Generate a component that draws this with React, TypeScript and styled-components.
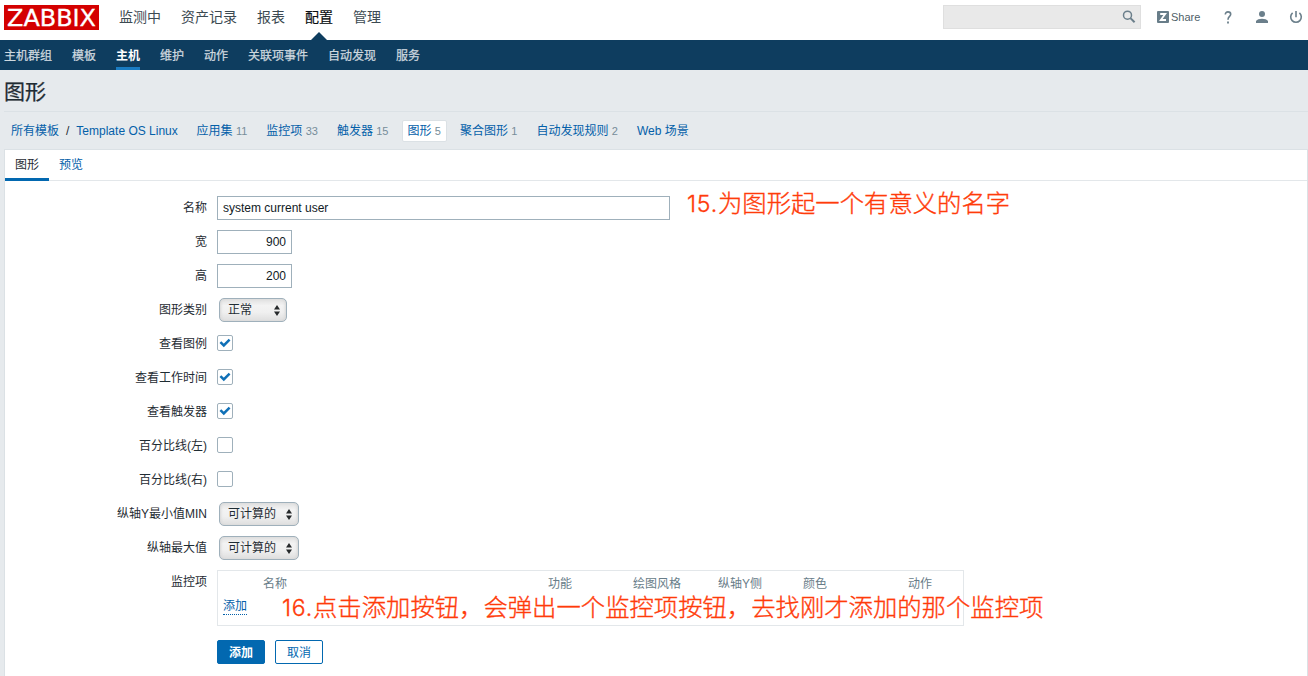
import React from 'react';
import styled, { createGlobalStyle } from 'styled-components';

const latin = "'Liberation Sans', 'Noto Sans CJK SC', sans-serif";

const GlobalStyle = createGlobalStyle`
  * { box-sizing: border-box; }
  body {
    margin: 0;
    background: #e6eaed;
    color: #1f2c33;
    font: 12px/16px ${latin};
    overflow: hidden;
  }
  a { color: inherit; text-decoration: none; }
`;

const Page = styled.div`
  display: flex;
  flex-direction: column;
  width: 1308px;
  height: 676px;
  overflow: hidden;
`;

const Header = styled.header`
  display: flex;
  height: 40px;
  padding-left: 4px;
  background: #fff;
`;

const Logo = styled.a`
  display: flex;
  align-items: center;
  justify-content: center;
  width: 95px;
  height: 25px;
  margin: 5px 20px 0 0;
  background: #d40000;

  svg { overflow: visible; }
`;

const MainMenu = styled.nav`
  display: flex;
  gap: 20px;
`;

const MainItem = styled.a<{ $active?: boolean }>`
  position: relative;
  padding-top: 7px;
  font-size: 14px;
  line-height: 20px;
  color: ${p => (p.$active ? '#0a0f12' : '#3c4a52')};
  ${p => p.$active && `
    -webkit-text-stroke: 0.2px #0a0f12;
    &::after {
      content: '';
      position: absolute;
      left: 50%;
      bottom: 0;
      margin-left: -8px;
      border: 8px solid transparent;
      border-top: 0;
      border-bottom-color: #0e3d5f;
    }
  `}
`;

const Tools = styled.div`
  display: flex;
  align-items: flex-start;
  margin-left: auto;
  padding: 5px 5px 0 0;
`;

const Search = styled.div`
  display: flex;
  align-items: center;
  justify-content: flex-end;
  width: 198px;
  height: 24px;
  padding-right: 4px;
  margin-right: 16px;
  border: 1px solid #dfdfdf;
  background: #e9e9e9;
`;

const Share = styled.a`
  display: flex;
  align-items: center;
  gap: 2px;
  width: 67px;
  height: 24px;
  font-size: 11px;
  color: #4f5f69;
`;

const ToolIcon = styled.a<{ $gap?: number }>`
  display: flex;
  align-items: center;
  height: 24px;
  margin-right: ${p => p.$gap ?? 0}px;
`;

const SubMenu = styled.nav`
  display: flex;
  gap: 20px;
  height: 30px;
  padding-left: 4px;
  background: #0e3d5f;
`;

const SubItem = styled.a<{ $active?: boolean }>`
  height: 30px;
  padding-top: 8px;
  font-weight: ${p => (p.$active ? 700 : 400)};
  -webkit-text-stroke: ${p => (p.$active ? 0 : 0.25)}px #ced8df;
  color: ${p => (p.$active ? '#fff' : '#ced8df')};
  border-bottom: 3px solid ${p => (p.$active ? '#1a7cc2' : 'transparent')};
`;

const Title = styled.h1`
  height: 42px;
  margin: 0 0 0 4px;
  padding-top: 8px;
  font-size: 21px;
  font-weight: 400;
  -webkit-text-stroke: 0.25px #1f2c33;
  line-height: 28px;
  color: #1f2c33;
  border-bottom: 1px solid #dbe1e5;
`;

const Crumbs = styled.div`
  display: flex;
  align-items: center;
  height: 37px;
  padding-left: 11px;
  color: #0460a9;
`;

const Slash = styled.span`
  margin: 0 7px;
  color: #1f2c33;
`;

const Objects = styled.div`
  display: flex;
  gap: 7px;
  margin-left: 12.8px;
`;

const ObjectLink = styled.a<{ $active?: boolean }>`
  display: flex;
  gap: 3.33px;
  height: 22px;
  padding: 2px 5px;
  border: 1px solid ${p => (p.$active ? '#dbe1e5' : 'transparent')};
  border-radius: 2px;
  background: ${p => (p.$active ? '#fff' : 'transparent')};
  white-space: nowrap;
`;

const Count = styled.span`
  font-size: 11px;
  color: #768d99;
`;

const Panel = styled.main`
  flex: 1;
  margin-left: 4px;
  border: 1px solid #dbe1e5;
  border-bottom: 0;
  background: #fff;
`;

const Tabs = styled.div`
  display: flex;
  height: 31px;
  border-bottom: 1px solid #e3e7ea;
`;

const Tab = styled.a<{ $active?: boolean }>`
  height: 31px;
  padding: 7px 10px 0;
  color: ${p => (p.$active ? '#1f2c33' : '#0460a9')};
  border-bottom: 3px solid ${p => (p.$active ? '#0268b0' : 'transparent')};
`;

const Form = styled.form`
  display: flex;
  flex-direction: column;
  gap: 10px;
  padding-top: 15px;
`;

const Row = styled.div`
  position: relative;
  display: grid;
  grid-template-columns: 202px auto;
  column-gap: 10px;
  justify-content: start;
  align-items: start;
  min-height: 24px;
`;

const Label = styled.label`
  padding-top: 4px;
  text-align: right;
  color: #1f2c33;
`;

const Input = styled.input<{ $w: number; $right?: boolean }>`
  width: ${p => p.$w}px;
  height: 24px;
  padding: 0 5px;
  border: 1px solid #9fb0bb;
  border-radius: 0;
  outline: 0;
  background: #fff;
  font: 12px ${latin};
  color: #111a1f;
  text-align: ${p => (p.$right ? 'right' : 'left')};
`;

const Select = styled.div<{ $w: number }>`
  display: flex;
  align-items: center;
  justify-content: space-between;
  width: ${p => p.$w}px;
  height: 24px;
  margin-left: 2px;
  padding: 0 6px 0 8px;
  border: 1px solid #9fb0bb;
  border-radius: 5px;
  background: linear-gradient(#e0e0e0, #f3f3f3 30%, #f0f0f0 60%, #dedede);
  box-shadow: inset 2px 0 3px -1px #d6d6d6, inset -2px 0 3px -1px #d6d6d6;
`;

const Check = styled.span`
  display: flex;
  align-items: center;
  justify-content: center;
  width: 16px;
  height: 16px;
  margin-top: 3px;
  border: 1px solid #9fb0bb;
  border-radius: 2px;
  background: #fff;
`;

const Items = styled.div`
  width: 747px;
  height: 56px;
  padding: 5px 5px 0;
  border: 1px solid #e3e7ea;
`;

const ItemsHead = styled.div`
  display: grid;
  grid-template-columns: 285px 85px 85px 85px 105px auto;
  padding-left: 40px;
  color: #687d89;
`;

const AddLink = styled.a`
  display: inline-block;
  height: 17px;
  margin-top: 6px;
  line-height: 17px;
  color: #0460a9;
  border-bottom: 1px dotted #0460a9;
`;

const Actions = styled.div`
  display: flex;
  gap: 10px;
  padding: 4px 0 0 212px;
`;

const Button = styled.button<{ $primary?: boolean }>`
  width: 48px;
  height: 24px;
  padding: 2px 0 0;
  border: 1px solid #0268b0;
  border-radius: 2px;
  background: ${p => (p.$primary ? '#0268b0' : '#fff')};
  color: ${p => (p.$primary ? '#fff' : '#0268b0')};
  font: ${p => (p.$primary ? 700 : 400)} 12px/16px ${latin};
`;

const Note = styled.span<{ $x: number; $y: number }>`
  position: absolute;
  left: ${p => p.$x}px;
  top: ${p => p.$y}px;
  font: 300 24.35px/24px 'Noto Sans CJK SC', sans-serif;
  -webkit-text-stroke: 0.35px #ff3b0a;
  color: #ff3b0a;
  white-space: nowrap;
`;

const NoteNumber = styled.span`
  font-family: Inter, sans-serif;
  font-size: 23px;
  font-weight: 300;
  letter-spacing: 0.8px;
`;

const Arrows = () => (
  <svg width="6" height="11" viewBox="0 0 6 11" fill="#26292b">
    <path d="M3 0 6 4.5H0zM3 11 0 6.5H6z" />
  </svg>
);

const checks: [string, boolean][] = [
  ['查看图例', true],
  ['查看工作时间', true],
  ['查看触发器', true],
  ['百分比线(左)', false],
  ['百分比线(右)', false],
];

const objects: [string, string][] = [
  ['应用集', '11'],
  ['监控项', '33'],
  ['触发器', '15'],
  ['图形', '5'],
  ['聚合图形', '1'],
  ['自动发现规则', '2'],
  ['Web 场景', ''],
];

export default function App() {
  return (
    <Page>
      <GlobalStyle />
      <Header>
        <Logo>
          <svg width="95" height="25" viewBox="0 0 95 25">
            <text x="3" y="20.8" fontFamily="'DejaVu Sans', sans-serif" fontSize="23" fill="#fff" stroke="#fff" strokeWidth="0.3" textLength="89" lengthAdjust="spacingAndGlyphs">ZABBIX</text>
          </svg>
        </Logo>
        <MainMenu>
          {['监测中', '资产记录', '报表', '配置', '管理'].map(t => (
            <MainItem key={t} $active={t === '配置'}>{t}</MainItem>
          ))}
        </MainMenu>
        <Tools>
          <Search>
            <svg width="14" height="14" viewBox="0 0 14 14" fill="none" stroke="#6b7f8b">
              <circle cx="5.5" cy="5.2" r="4" strokeWidth="1.5" />
              <path d="M8.4 8.1 12.6 12.3" strokeWidth="2" />
            </svg>
          </Search>
          <Share>
            <svg width="12" height="12" viewBox="0 0 12 12">
              <rect width="12" height="12" rx="1" fill="#687d89" />
              <path d="M3.2 3H8.2L3.8 9H9" fill="none" stroke="#fff" strokeWidth="1.8" />
            </svg>
            <span>Share</span>
          </Share>
          <ToolIcon $gap={24}>
            <svg width="8" height="13" viewBox="0 0 8 13" fill="none" stroke="#6b7f8b" strokeWidth="1.6">
              <path d="M1.3 3.6C1.3 1.8 2.4.9 4 .9S6.7 1.9 6.7 3.3C6.7 5.4 4 5.6 4 8.7" />
              <path d="M3.1 11.5H4.9" strokeWidth="1.9" />
            </svg>
          </ToolIcon>
          <ToolIcon $gap={21}>
            <svg width="12" height="12" viewBox="0 0 12 12" fill="#6b7f8b">
              <circle cx="6" cy="3" r="3" />
              <path d="M0 12V10C1.2 8.4 3.2 7.7 6 7.7S10.8 8.4 12 10V12Z" />
            </svg>
          </ToolIcon>
          <ToolIcon>
            <svg width="14" height="14" viewBox="0 0 14 14" fill="none" stroke="#6b7f8b" strokeWidth="1.6">
              <path d="M3.6 2.9A5.3 5.3 0 1 0 10.4 2.9M7 1V7.3" />
            </svg>
          </ToolIcon>
        </Tools>
      </Header>
      <SubMenu>
        {['主机群组', '模板', '主机', '维护', '动作', '关联项事件', '自动发现', '服务'].map(t => (
          <SubItem key={t} $active={t === '主机'}>{t}</SubItem>
        ))}
      </SubMenu>
      <Title>图形</Title>
      <Crumbs>
        <a>所有模板</a>
        <Slash>/</Slash>
        <a>Template OS Linux</a>
        <Objects>
          {objects.map(([name, n]) => (
            <ObjectLink key={name} $active={name === '图形'}>
              {name}
              {n && <Count>{n}</Count>}
            </ObjectLink>
          ))}
        </Objects>
      </Crumbs>
      <Panel>
        <Tabs>
          <Tab $active>图形</Tab>
          <Tab>预览</Tab>
        </Tabs>
        <Form>
          <Row>
            <Label>名称</Label>
            <Input $w={453} defaultValue="system current user" />
            <Note $x={682} $y={-6}><NoteNumber>15.</NoteNumber>为图形起一个有意义的名字</Note>
          </Row>
          <Row>
            <Label>宽</Label>
            <Input $w={75} $right defaultValue="900" />
          </Row>
          <Row>
            <Label>高</Label>
            <Input $w={75} $right defaultValue="200" />
          </Row>
          <Row>
            <Label>图形类别</Label>
            <Select $w={68}>正常<Arrows /></Select>
          </Row>
          {checks.map(([name, on]) => (
            <Row key={name}>
              <Label>{name}</Label>
              <Check>
                {on && (
                  <svg width="12" height="10" viewBox="0 0 12 10" fill="none" stroke="#0f70b7" strokeWidth="2.5">
                    <path d="M1.4 4.2 4.8 7.5 10.6 1.7" />
                  </svg>
                )}
              </Check>
            </Row>
          ))}
          <Row>
            <Label>纵轴Y最小值MIN</Label>
            <Select $w={80}>可计算的<Arrows /></Select>
          </Row>
          <Row>
            <Label>纵轴最大值</Label>
            <Select $w={80}>可计算的<Arrows /></Select>
          </Row>
          <Row>
            <Label>监控项</Label>
            <Items>
              <ItemsHead>
                {['名称', '功能', '绘图风格', '纵轴Y侧', '颜色', '动作'].map(t => <span key={t}>{t}</span>)}
              </ItemsHead>
              <AddLink>添加</AddLink>
            </Items>
            <Note $x={277} $y={24}><NoteNumber>16.</NoteNumber>点击添加按钮，会弹出一个监控项按钮，去找刚才添加的那个监控项</Note>
          </Row>
          <Actions>
            <Button type="button" $primary>添加</Button>
            <Button type="button">取消</Button>
          </Actions>
        </Form>
      </Panel>
    </Page>
  );
}
